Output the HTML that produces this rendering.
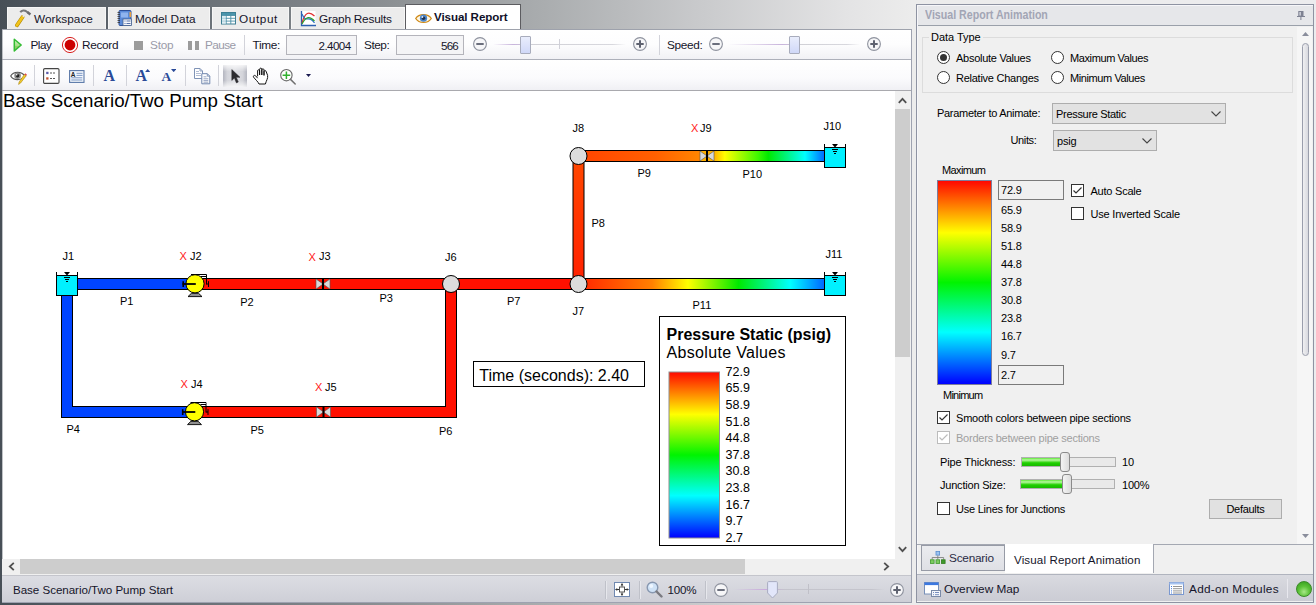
<!DOCTYPE html>
<html><head><meta charset="utf-8"><title>Visual Report</title>
<style>
*{box-sizing:border-box;margin:0;padding:0}
html,body{width:1316px;height:605px;overflow:hidden;background:#f0f0f0}
body{font-family:"Liberation Sans",sans-serif;font-size:12px;color:#1a1a1a;position:relative}
.abs,.abs *{position:absolute}
#root{left:0;top:0;width:1316px;height:605px;background:linear-gradient(90deg,#474f57 0px,#5d646b 120px,#747a80 260px,#8e9295 400px,#a9acae 540px,#c9cacc 700px,#e4e4e5 850px,#ececec 912px,#ececee 1316px);overflow:hidden}
.t{white-space:nowrap;line-height:1}
/* top tab bar */
#tabbar{left:0;top:0;width:912px;height:30px}
.tab{top:7px;height:22px;background:#ececec;border:1px solid #f6f6f6;border-bottom:none}
.tab .t{font-size:11.8px;top:5.6px;color:#15152a}
#tabact{left:405px;top:4px;width:116px;height:26px;background:#fff;border:1px solid #5c5c60;border-bottom:none}
/* toolbars */
#tb1{left:2px;top:29px;width:909px;height:31px;border-top:1px solid #9ea2ac;background:linear-gradient(#ffffff 0%,#fdfdfe 50%,#f1f1f5 100%);border-bottom:1px solid #adb0ba}
#tb2{left:2px;top:60px;width:909px;height:31px;background:linear-gradient(#ffffff 0%,#fbfbfd 60%,#f0f0f4 100%);border-bottom:1px solid #a9a9ae}
.tbt{font-size:11.8px;top:9.8px;color:#15152a}
.dis{color:#9a9aa8}
.sep{width:1px;background:#d2d3da}
.box{background:#f4f4f6;border:1px solid #b4b4bb}
/* canvas */
#canvas{left:2px;top:91px;width:893px;height:468px;background:#fff;overflow:hidden}
.lbl{font-size:11px;color:#000}
.red{color:#ff2020}
/* status */
#status{left:2px;top:575px;width:909px;height:27px;background:linear-gradient(#dcdde3,#cecfd7);border-top:1px solid #c4c5cc}
/* right panel */
#rp{left:916px;top:4px;width:398px;height:599px;border:1px solid #8e93a2;background:#f0f0f0}
.rt{font-size:11px;color:#000;letter-spacing:-0.2px;margin-top:1px}
.radio{width:13px;height:13px;border-radius:50%;border:1px solid #333;background:#fff}
.chk{width:13px;height:13px;border:1px solid #333;background:#fff}
</style></head><body>
<div id="root" class="abs">

<!-- ====== TAB BAR ====== -->
<div id="tabbar">
  <div class="tab" style="left:7px;width:99px"><svg style="left:6px;top:0px" width="20" height="20" viewBox="14 8 20 20"><path d="M16.9 25.3 L22.6 17" stroke="#b08800" stroke-width="3.8" stroke-linecap="round"/><path d="M16.9 25.3 L22.6 17" stroke="#f2c31c" stroke-width="2.7" stroke-linecap="round"/><path d="M22.9 16.6 L26.3 12.6" stroke="#e8e8ea" stroke-width="2"/><path d="M20.3 12.2 C21.6 10 24.6 9.8 26.6 11.6 L28.2 12.6" fill="none" stroke="#77787c" stroke-width="2"/><path d="M28.3 11.3 L31.2 13.6 L29.6 15.6 L26.8 13.3Z" fill="#6a6b70"/></svg><span class="t" style="left:26px;letter-spacing:0.01px">Workspace</span></div>
  <div class="tab" style="left:108px;width:102px"><svg style="left:6.5px;top:1px" width="18" height="18" viewBox="0 0 18 18"><rect x="3" y="1.5" width="12" height="15" rx="1" fill="#5a8ad8" stroke="#2c4f98" stroke-width="1"/><rect x="5" y="3.5" width="7" height="5" fill="#8fb4ee"/><rect x="7" y="10" width="8.5" height="6.5" fill="#f4f6fb" stroke="#44608e" stroke-width="0.8"/><path d="M8.5 12h1M10.5 12h4M8.5 14.5h1M10.5 14.5h4" stroke="#5570a8" stroke-width="1"/><path d="M1.5 3.5h2.5M1.5 5.5h2.5M1.5 7.5h2.5M1.5 9.5h2.5M1.5 11.5h2.5M1.5 13.5h2.5" stroke="#333" stroke-width="0.8"/><rect x="13.5" y="3" width="1.6" height="5" fill="#e8a040"/></svg><span class="t" style="left:26px;letter-spacing:0.02px">Model Data</span></div>
  <div class="tab" style="left:212px;width:77px"><svg style="left:8px;top:4px" width="16" height="13" viewBox="0 0 16 13"><rect x="0.5" y="0.5" width="14" height="11.5" fill="#fff" stroke="#3d7f94" stroke-width="1"/><rect x="1" y="1" width="13" height="2.5" fill="#4b95ac"/><path d="M1 3.5h13M1 6.3h13M1 9.1h13M5.2 1v11M9.8 1v11" stroke="#4b8fa6" stroke-width="0.9"/><rect x="1" y="3.9" width="3.8" height="8" fill="#cfe6ee" opacity="0.7"/></svg><span class="t" style="left:26px;letter-spacing:0.58px">Output</span></div>
  <div class="tab" style="left:291px;width:114px"><svg style="left:8px;top:2px" width="17" height="17" viewBox="0 0 17 17"><rect x="1.5" y="1" width="14" height="14" fill="#fff"/><path d="M1.5 1v14.5h14.5" fill="none" stroke="#2d5fb0" stroke-width="1.3"/><path d="M2 13 C5 2 9 1 14.5 6" fill="none" stroke="#e03030" stroke-width="1.3"/><path d="M2 4 C6 14 9 4 14.5 13" fill="none" stroke="#2d70c8" stroke-width="1.2"/><path d="M2 14 C6 6 10 6 14.5 11" fill="none" stroke="#30a030" stroke-width="1.3"/></svg><span class="t" style="left:27px;letter-spacing:-0.21px">Graph Results</span></div>
</div>
<div id="tabact"><svg style="left:9px;top:8px" width="17" height="11" viewBox="0 0 17 11"><path d="M0.7 5.5 C4 0.3 13 0.3 16.3 5.5 C13 10.7 4 10.7 0.7 5.5Z" fill="#fdf6e4" stroke="#d08a18" stroke-width="1.3"/><circle cx="8.5" cy="5.2" r="3.6" fill="#4a84c8"/><circle cx="8.5" cy="5.2" r="1.8" fill="#22304a"/><circle cx="7.4" cy="4" r="0.9" fill="#dfeaf8"/></svg><span class="t" style="left:28px;top:6px;font-size:11.6px;font-weight:bold;color:#101028;letter-spacing:-0.08px">Visual Report</span></div>

<!-- ====== TOOLBAR 1 ====== -->
<div id="tb1">
  <svg style="left:10px;top:7px" width="12" height="17" viewBox="0 0 12 17"><defs><linearGradient id="pg" x1="0" x2="0" y1="0" y2="1"><stop offset="0" stop-color="#d4f4c0"/><stop offset="0.55" stop-color="#a4e088"/><stop offset="0.6" stop-color="#90cc68"/><stop offset="1" stop-color="#98d070"/></linearGradient></defs><path d="M2.3 2.2 L9.2 8 L2.3 13.9 Z" fill="url(#pg)" stroke="#34bc34" stroke-width="1.5" stroke-linejoin="round"/></svg>
  <span class="t tbt" style="left:28.5px;letter-spacing:-0.52px">Play</span>
  <svg style="left:59px;top:6px" width="18" height="18" viewBox="0 0 18 18"><circle cx="9" cy="9" r="7.6" fill="#fff" stroke="#d82020" stroke-width="1"/><circle cx="9" cy="9" r="5.4" fill="#cc0000"/></svg>
  <span class="t tbt" style="left:80px;letter-spacing:-0.3px">Record</span>
  <div style="left:132px;top:11px;width:9px;height:9px;background:#9c9c9c"></div>
  <span class="t tbt dis" style="left:148px;letter-spacing:-0.22px">Stop</span>
  <div style="left:186px;top:11px;width:4px;height:9px;background:#9c9c9c"></div><div style="left:193px;top:11px;width:4px;height:9px;background:#9c9c9c"></div>
  <span class="t tbt dis" style="left:203px;letter-spacing:-0.59px">Pause</span>
  <div class="sep" style="left:242px;top:5px;height:20px"></div>
  <span class="t tbt" style="left:250.5px;letter-spacing:-0.34px">Time:</span>
  <div class="box" style="left:284px;top:5px;width:71px;height:20px"><span class="t" style="right:5.5px;top:4px;font-size:11.6px;color:#15152a;letter-spacing:-0.59px">2.4004</span></div>
  <span class="t tbt" style="left:362px;letter-spacing:-0.47px">Step:</span>
  <div class="box" style="left:394px;top:5px;width:68px;height:20px"><span class="t" style="right:5px;top:4px;font-size:11.6px;color:#15152a;letter-spacing:-0.77px">566</span></div>
  <svg style="left:470px;top:5.5px" width="16" height="16" viewBox="0 0 16 16"><circle cx="8" cy="8" r="6.4" fill="#f6f6f8" stroke="#8e929e" stroke-width="1.1"/><path d="M4.3 8h7.4" stroke="#6a6e7c" stroke-width="2"/></svg>
  <div style="left:491px;top:14px;width:133px;height:1px;background:linear-gradient(90deg,rgba(200,180,220,0) 0%,#c8b4dc 15%,#d0d0d6 28%,#d8d8de 90%,rgba(216,216,222,0) 100%)"></div><div style="left:557px;top:9px;width:1px;height:10px;background:#d0d0d8"></div><div style="left:518px;top:6px;width:11px;height:18px;border:1px solid #a8acbc;border-radius:1px;background:linear-gradient(#e9edfc,#d0d8f8)"></div>
  <svg style="left:629.5px;top:5.5px" width="16" height="16" viewBox="0 0 16 16"><circle cx="8" cy="8" r="6.4" fill="#f6f6f8" stroke="#8e929e" stroke-width="1.1"/><path d="M4.3 8h7.4M8 4.3v7.4" stroke="#5e6270" stroke-width="2"/></svg>
  <div class="sep" style="left:657px;top:5px;height:20px"></div>
  <span class="t tbt" style="left:665px;letter-spacing:-0.33px">Speed:</span>
  <svg style="left:706px;top:5.5px" width="16" height="16" viewBox="0 0 16 16"><circle cx="8" cy="8" r="6.4" fill="#f6f6f8" stroke="#8e929e" stroke-width="1.1"/><path d="M4.3 8h7.4" stroke="#6a6e7c" stroke-width="2"/></svg>
  <div style="left:726px;top:14px;width:132px;height:1px;background:linear-gradient(90deg,rgba(200,180,220,0) 0%,#c8b4dc 41%,#d0d0d6 54%,#d8d8de 90%,rgba(216,216,222,0) 100%)"></div><div style="left:787px;top:6px;width:11px;height:18px;border:1px solid #a8acbc;border-radius:1px;background:linear-gradient(#e9edfc,#d0d8f8)"></div>
  <svg style="left:863.5px;top:5.5px" width="16" height="16" viewBox="0 0 16 16"><circle cx="8" cy="8" r="6.4" fill="#f6f6f8" stroke="#8e929e" stroke-width="1.1"/><path d="M4.3 8h7.4M8 4.3v7.4" stroke="#5e6270" stroke-width="2"/></svg>
</div>

<!-- ====== TOOLBAR 2 ====== -->
<div id="tb2">
  <svg style="left:7.5px;top:9.5px" width="18" height="15" viewBox="0 0 18 15"><path d="M0.7 6 C3.5 1.2 11.5 1.2 15 6 C11.5 10.8 3.5 10.8 0.7 6Z" fill="#fff" stroke="#555" stroke-width="1.1"/><circle cx="7.6" cy="5.8" r="3.3" fill="#8a8a8a"/><circle cx="7.6" cy="5.8" r="1.7" fill="#222"/><circle cx="6.7" cy="4.8" r="0.8" fill="#fff"/><path d="M16.2 5.8 L10.6 13 L8.6 14.4 L9.1 12 L14.4 4.4Z" fill="#f4cc28" stroke="#a88414" stroke-width="0.6"/><path d="M14.4 4.4 L16.2 5.8 L17 4.7 L15.3 3.3Z" fill="#e04848"/></svg>
  <div class="sep" style="left:32px;top:5px;height:21px"></div>
  <svg style="left:40.5px;top:8px" width="17" height="16" viewBox="0 0 17 16"><rect x="0.6" y="0.6" width="15.4" height="14.8" rx="1.2" fill="#fff" stroke="#444" stroke-width="1.1"/><rect x="3.2" y="3.8" width="2.3" height="2.3" fill="#5a5aa8"/><path d="M7 5h6" stroke="#555" stroke-width="1" stroke-dasharray="2 1"/><rect x="3.2" y="9.3" width="2.3" height="2.3" fill="#c05030"/><path d="M7 10.5h6" stroke="#555" stroke-width="1" stroke-dasharray="2 1"/></svg>
  <svg style="left:67px;top:10px" width="16" height="13" viewBox="0 0 16 13"><rect x="0.6" y="0.6" width="14.4" height="11.8" fill="#f4f7fc" stroke="#5a78a8" stroke-width="1.1"/><text x="1.8" y="7" font-size="6.5" font-weight="bold" font-family="Liberation Sans, sans-serif" fill="#222">A</text><path d="M7.5 3.3h6M7.5 5.4h6M2.3 7.8h11M2.3 10h11" stroke="#6c8cc0" stroke-width="0.9"/></svg>
  <div class="sep" style="left:91px;top:5px;height:21px"></div>
  <span class="t" style="left:101.5px;top:8px;font-family:'Liberation Serif',serif;font-weight:bold;font-size:16px;color:#2a4a98">A</span>
  <div class="sep" style="left:124px;top:5px;height:21px"></div>
  <span class="t" style="left:133.5px;top:8px;font-family:'Liberation Serif',serif;font-weight:bold;font-size:16px;color:#2a4a98">A</span>
  <svg style="left:143px;top:9px" width="5.4" height="3.2" viewBox="0 0 7 4"><path d="M0 4 L3.5 0 L7 4Z" fill="#2a4a98"/></svg>
  <span class="t" style="left:159.5px;top:10px;font-family:'Liberation Serif',serif;font-weight:bold;font-size:13.5px;color:#2a4a98">A</span>
  <svg style="left:169px;top:9px" width="5.4" height="3.2" viewBox="0 0 7 4"><path d="M0 0 L3.5 4 L7 0Z" fill="#2a4a98"/></svg>
  <div class="sep" style="left:183px;top:5px;height:21px"></div>
  <svg style="left:191px;top:7px" width="19" height="18" viewBox="0 0 19 18"><path d="M1.5 1.5h5.5l2.5 2.5v7.5h-8z" fill="#fff" stroke="#7f93b6" stroke-width="1"/><path d="M7 1.5v2.5h2.5" fill="none" stroke="#7f93b6" stroke-width="0.8"/><path d="M3 4.5h3M3 6.5h5M3 8.5h5" stroke="#a9b6cf" stroke-width="0.9"/><path d="M8.8 6.7h5.5l2.5 2.5v7.6h-8z" fill="#fff" stroke="#6f86ad" stroke-width="1"/><path d="M14.3 6.7v2.5h2.5" fill="none" stroke="#6f86ad" stroke-width="0.8"/><path d="M10.5 9.8h3M10.5 11.8h4.8M10.5 13.6h4.8M10.5 15.2h4.8" stroke="#8d9dbd" stroke-width="0.9"/></svg>
  <div class="sep" style="left:216px;top:5px;height:21px"></div>
  <div style="left:221px;top:5px;width:24px;height:22px;background:linear-gradient(90deg,#b4b6c0 0%,#d4d5db 18%,#dfe0e5 50%,#d4d5db 82%,#b4b6c0 100%)"><div style="left:0;top:0;width:24px;height:22px;background:linear-gradient(rgba(255,255,255,0.75),rgba(255,255,255,0) 30%,rgba(255,255,255,0) 70%,rgba(255,255,255,0.75))"></div></div>
  <svg style="left:228.5px;top:9px" width="10" height="15" viewBox="0 0 10 15"><path d="M0.8 0.6 L0.8 11.4 L3.4 9 L5.4 13.9 L7.3 13 L5.3 8.3 L9 8.3 Z" fill="#2c2c30" stroke="#2c2c30" stroke-width="0.5" stroke-linejoin="round"/></svg>
  <svg style="left:250px;top:7px" width="18" height="18" viewBox="0 0 18 18"><path d="M5.6 9.3 V3.8 C5.6 2.4 7.6 2.4 7.6 3.8 V8 V2.2 C7.6 0.8 9.8 0.8 9.8 2.2 V8 V2.8 C9.8 1.5 12 1.5 12 2.8 V8.4 V4.6 C12 3.3 14.2 3.3 14.2 4.6 L15.6 8.4 C16.2 11.5 14.2 13.6 13.4 17 H7 C6.4 15 3.2 12.4 1.6 10.2 C0.7 8.8 2.6 7.6 3.8 9 L5.6 11.2" fill="#fff" stroke="#111" stroke-width="1" stroke-linejoin="round"/></svg>
  <svg style="left:277px;top:8px" width="18" height="18" viewBox="0 0 18 18"><circle cx="7.4" cy="7.2" r="5.7" fill="#fff" stroke="#686868" stroke-width="1.1"/><path d="M3.6 7.2h7.6M7.4 3.4v7.6" stroke="#30b030" stroke-width="1.5"/><path d="M11.5 11.4 L16.2 16" stroke="#707070" stroke-width="1.5" stroke-linecap="round"/></svg>
  <svg style="left:304px;top:14px" width="5" height="3" viewBox="0 0 5 3"><path d="M0 0 L2.5 3 L5 0Z" fill="#1a1a50"/></svg>
</div>

<!-- ====== CANVAS ====== -->
<div id="canvas">
  <span class="t" style="left:1px;top:1px;font-size:18.7px;color:#000">Base Scenario/Two Pump Start</span>
<svg class="cv" width="893" height="468" viewBox="2 91 893 468" style="left:0;top:0" font-family="Liberation Sans, sans-serif">
<defs>
<linearGradient id="gP9" x1="0" x2="1" y1="0" y2="0"><stop offset="0" stop-color="#ff4400"/><stop offset="0.6" stop-color="#ff6000"/><stop offset="1" stop-color="#ff8c00"/></linearGradient>
<linearGradient id="gP10" x1="0" x2="1" y1="0" y2="0"><stop offset="0" stop-color="#ff9800"/><stop offset="0.07" stop-color="#ffb800"/><stop offset="0.15" stop-color="#ffff00"/><stop offset="0.43" stop-color="#40f800"/><stop offset="0.52" stop-color="#00e800"/><stop offset="0.83" stop-color="#00ffff"/><stop offset="1" stop-color="#0064ff"/></linearGradient>
<linearGradient id="gP11" x1="0" x2="1" y1="0" y2="0"><stop offset="0" stop-color="#ff2800"/><stop offset="0.04" stop-color="#ff3000"/><stop offset="0.30" stop-color="#ff8000"/><stop offset="0.445" stop-color="#ffff00"/><stop offset="0.65" stop-color="#00e800"/><stop offset="0.86" stop-color="#00ffff"/><stop offset="1" stop-color="#0064ff"/></linearGradient>
<linearGradient id="gP8" x1="0" x2="0" y1="0" y2="1"><stop offset="0" stop-color="#ff4800"/><stop offset="1" stop-color="#ff2000"/></linearGradient>
<linearGradient id="gLeg" x1="0" x2="0" y1="0" y2="1"><stop offset="0" stop-color="#ff0800"/><stop offset="0.255" stop-color="#ffff00"/><stop offset="0.5" stop-color="#00f400"/><stop offset="0.745" stop-color="#00ffff"/><stop offset="1" stop-color="#0000ff"/></linearGradient>
</defs>
<path d="M67 290 V412 H194" fill="none" stroke="#000" stroke-width="12" stroke-linejoin="miter"/>
<path d="M67 290 V412 H194" fill="none" stroke="#0044ff" stroke-width="10" stroke-linejoin="miter"/>
<path d="M194 412 H451 V284" fill="none" stroke="#000" stroke-width="12"/>
<path d="M194 412 H451 V284" fill="none" stroke="#ff1000" stroke-width="10"/>
<rect x="77" y="278" width="118" height="12" fill="#000"/><rect x="77" y="279" width="118" height="10" fill="#0044ff"/>
<rect x="195" y="278" width="383" height="12" fill="#000"/><rect x="195" y="279" width="383" height="10" fill="#ff1000"/>
<rect x="572.5" y="156" width="12" height="128" fill="#000"/><rect x="573.5" y="156" width="10" height="128" fill="url(#gP8)"/>
<rect x="578" y="150" width="129" height="12" fill="#000"/><rect x="578" y="151" width="129" height="10" fill="url(#gP9)"/>
<rect x="707" y="150" width="118" height="12" fill="#000"/><rect x="707" y="151" width="118" height="10" fill="url(#gP10)"/>
<rect x="578" y="278" width="247" height="12" fill="#000"/><rect x="578" y="279" width="247" height="10" fill="url(#gP11)"/>
<rect x="56.5" y="275.5" width="21" height="20" fill="#00f0ff" stroke="#000" stroke-width="1"/><path d="M56.5 272 V276 M77.5 272 V276" stroke="#000" stroke-width="1" fill="none"/><path d="M64 272 h6 l-3 3.5 z" fill="#000"/><path d="M64 277.5 h6 M65 279.5 h4 M66 281.5 h2" stroke="#000" stroke-width="1"/>
<rect x="824.5" y="147.5" width="21" height="20" fill="#00f0ff" stroke="#000" stroke-width="1"/><path d="M824.5 144 V148 M845.5 144 V148" stroke="#000" stroke-width="1" fill="none"/><path d="M832 144 h6 l-3 3.5 z" fill="#000"/><path d="M832 149.5 h6 M833 151.5 h4 M834 153.5 h2" stroke="#000" stroke-width="1"/>
<rect x="824.5" y="275.5" width="21" height="20" fill="#00f0ff" stroke="#000" stroke-width="1"/><path d="M824.5 272 V276 M845.5 272 V276" stroke="#000" stroke-width="1" fill="none"/><path d="M832 272 h6 l-3 3.5 z" fill="#000"/><path d="M832 277.5 h6 M833 279.5 h4 M834 281.5 h2" stroke="#000" stroke-width="1"/>
<circle cx="451" cy="284" r="8.5" fill="#dcdcdc" stroke="#000" stroke-width="1"/>
<circle cx="578.5" cy="284" r="8.5" fill="#dcdcdc" stroke="#000" stroke-width="1"/>
<circle cx="578.5" cy="156" r="8.5" fill="#dcdcdc" stroke="#000" stroke-width="1"/>
<rect x="316" y="279" width="14" height="10" fill="#ff1000"/><path d="M316 279 L323 284 L316 289 Z M330 279 L323 284 L330 289 Z" fill="#d8d8d8" stroke="#555" stroke-width="0.6"/><path d="M323 279 V289" stroke="#000" stroke-width="2"/>
<rect x="316.5" y="407" width="14" height="10" fill="#ff1000"/><path d="M316.5 407 L323.5 412 L316.5 417 Z M330.5 407 L323.5 412 L330.5 417 Z" fill="#d8d8d8" stroke="#555" stroke-width="0.6"/><path d="M323.5 407 V417" stroke="#000" stroke-width="2"/>
<rect x="700" y="151" width="14" height="10" fill="#ffb000"/><path d="M700 151 L707 156 L700 161 Z M714 151 L707 156 L714 161 Z" fill="#d8d8d8" stroke="#555" stroke-width="0.6"/><path d="M707 151 V161" stroke="#000" stroke-width="2"/>
<path d="M188 296.6 L191.4 293.3 H198.6 L202 296.6 Z" fill="#909090" stroke="#000" stroke-width="0.9"/><path d="M191 274.5 H206.5 V284.5" fill="none" stroke="#000" stroke-width="1"/><path d="M201 276.5 H206.5" fill="none" stroke="#000" stroke-width="1"/><rect x="202" y="275" width="4" height="1" fill="#fff"/><path d="M208.5 281.2 V287 M206.5 284 H208.5" fill="none" stroke="#000" stroke-width="1"/><circle cx="195" cy="283.8" r="9.1" fill="#ffff00" stroke="#000" stroke-width="1"/><path d="M182.5 284 H195.8" stroke="#000" stroke-width="1.8"/><path d="M183.2 281.2 V287" stroke="#000" stroke-width="1.6"/>
<path d="M187.5 424.6 L190.9 421.3 H198.1 L201.5 424.6 Z" fill="#909090" stroke="#000" stroke-width="0.9"/><path d="M190.5 402.5 H206.0 V412.5" fill="none" stroke="#000" stroke-width="1"/><path d="M200.5 404.5 H206.0" fill="none" stroke="#000" stroke-width="1"/><rect x="201.5" y="403" width="4" height="1" fill="#fff"/><path d="M208.0 409.2 V415 M206.0 412 H208.0" fill="none" stroke="#000" stroke-width="1"/><circle cx="194.5" cy="411.8" r="9.1" fill="#ffff00" stroke="#000" stroke-width="1"/><path d="M182.0 412 H195.3" stroke="#000" stroke-width="1.8"/><path d="M182.7 409.2 V415" stroke="#000" stroke-width="1.6"/>
<text x="62.5" y="260" font-size="11" fill="#000">J1</text>
<text x="190" y="260" font-size="11" fill="#000">J2</text>
<text x="319" y="260" font-size="11" fill="#000">J3</text>
<text x="445" y="261" font-size="11" fill="#000">J6</text>
<text x="572.5" y="132" font-size="11" fill="#000">J8</text>
<text x="700" y="131.5" font-size="11" fill="#000">J9</text>
<text x="823.5" y="130" font-size="11" fill="#000">J10</text>
<text x="825.5" y="258" font-size="11" fill="#000">J11</text>
<text x="572.5" y="315" font-size="11" fill="#000">J7</text>
<text x="191" y="388" font-size="11" fill="#000">J4</text>
<text x="325" y="391" font-size="11" fill="#000">J5</text>
<text x="120" y="304.5" font-size="11" fill="#000">P1</text>
<text x="240.2" y="306" font-size="11" fill="#000">P2</text>
<text x="379.5" y="301.5" font-size="11" fill="#000">P3</text>
<text x="507" y="304.5" font-size="11" fill="#000">P7</text>
<text x="591.5" y="227" font-size="11" fill="#000">P8</text>
<text x="637.5" y="177" font-size="11" fill="#000">P9</text>
<text x="742.5" y="178" font-size="11" fill="#000">P10</text>
<text x="692.5" y="309" font-size="11" fill="#000">P11</text>
<text x="66.5" y="433" font-size="11" fill="#000">P4</text>
<text x="250.5" y="434" font-size="11" fill="#000">P5</text>
<text x="439" y="435" font-size="11" fill="#000">P6</text>
<text x="179.5" y="260" font-size="11" fill="#ff2020">X</text>
<text x="308.5" y="260.5" font-size="11" fill="#ff2020">X</text>
<text x="691" y="131.5" font-size="11" fill="#ff2020">X</text>
<text x="180.5" y="388" font-size="11" fill="#ff2020">X</text>
<text x="315" y="391" font-size="11" fill="#ff2020">X</text>
<rect x="473.5" y="361.5" width="171" height="25" fill="#fff" stroke="#000" stroke-width="1"/>
<text x="479.3" y="380.6" font-size="16" fill="#000">Time (seconds): 2.40</text>
<rect x="659.5" y="316.5" width="186" height="229" fill="#fff" stroke="#000" stroke-width="1"/>
<text x="666.5" y="339.5" font-size="16" font-weight="bold" fill="#000">Pressure Static (psig)</text>
<text x="666.5" y="358" font-size="16" fill="#000" letter-spacing="0.33">Absolute Values</text>
<rect x="669" y="372" width="50.5" height="166" fill="url(#gLeg)" stroke="#909090" stroke-width="1"/>
<text x="725.5" y="375.8" font-size="12.5" fill="#000">72.9</text>
<text x="725.5" y="392.40000000000003" font-size="12.5" fill="#000">65.9</text>
<text x="725.5" y="409.0" font-size="12.5" fill="#000">58.9</text>
<text x="725.5" y="425.6" font-size="12.5" fill="#000">51.8</text>
<text x="725.5" y="442.20000000000005" font-size="12.5" fill="#000">44.8</text>
<text x="725.5" y="458.8" font-size="12.5" fill="#000">37.8</text>
<text x="725.5" y="475.40000000000003" font-size="12.5" fill="#000">30.8</text>
<text x="725.5" y="492.0" font-size="12.5" fill="#000">23.8</text>
<text x="725.5" y="508.6" font-size="12.5" fill="#000">16.7</text>
<text x="725.5" y="525.2" font-size="12.5" fill="#000">9.7</text>
<text x="725.5" y="541.8" font-size="12.5" fill="#000">2.7</text>
</svg>
</div>

<div style="left:911px;top:29px;width:1px;height:574px;background:#9ea2b0"></div>
<div style="left:2px;top:602px;width:910px;height:1px;background:#9ea2b0"></div>
<div style="left:2px;top:30px;width:1px;height:572px;background:#8a9098;opacity:0.55"></div>
<!-- ====== SCROLLBARS ====== -->
<div id="vs" style="left:895px;top:91px;width:16px;height:468px;background:#f0f0f0"><div style="left:0;top:18px;width:15px;height:248px;background:#cdcdcd"></div>
<svg style="left:3px;top:6px" width="9" height="7" viewBox="0 0 9 7"><path d="M0.8 5.8 L4.5 1.8 L8.2 5.8" fill="none" stroke="#505050" stroke-width="1.8"/></svg>
<svg style="left:3px;top:455px" width="9" height="7" viewBox="0 0 9 7"><path d="M0.8 1.2 L4.5 5.2 L8.2 1.2" fill="none" stroke="#505050" stroke-width="1.8"/></svg></div>
<div id="hs" style="left:2px;top:559px;width:909px;height:16px;background:#f0f0f0"><div style="left:18px;top:0;width:725px;height:15px;background:#cdcdcd"></div>
<svg style="left:6px;top:3px" width="7" height="9" viewBox="0 0 7 9"><path d="M5.8 0.8 L1.8 4.5 L5.8 8.2" fill="none" stroke="#505050" stroke-width="1.8"/></svg>
<svg style="left:881px;top:3px" width="7" height="9" viewBox="0 0 7 9"><path d="M1.2 0.8 L5.2 4.5 L1.2 8.2" fill="none" stroke="#505050" stroke-width="1.8"/></svg></div>

<!-- ====== STATUS ====== -->
<div id="status"><span class="t" style="left:11px;top:7.5px;font-size:11.8px;font-size:11.6px;color:#15152a;letter-spacing:-0.04px">Base Scenario/Two Pump Start</span>
<div class="sep" style="left:603px;top:5px;height:18px;background:#bfc1c9;box-shadow:1px 0 0 #e6e7ec"></div>
<svg style="left:612px;top:6px" width="16" height="15" viewBox="0 0 16 15"><rect x="0.5" y="0.5" width="15" height="14" fill="#fff" stroke="#7088b0" stroke-width="1"/><rect x="5.5" y="5" width="5" height="5" fill="#fff" stroke="#444" stroke-width="0.9"/><path d="M8 1.5v3M8 10.5v3M1.5 7.5h3.5M11 7.5h3.5" stroke="#333" stroke-width="1"/><path d="M6.6 3.2L8 1.4l1.4 1.8zM6.6 11.8L8 13.6l1.4-1.8zM3.2 6.1L1.4 7.5l1.8 1.4zM12.8 6.1l1.8 1.4-1.8 1.4z" fill="#333"/></svg>
<div class="sep" style="left:637px;top:5px;height:18px;background:#bfc1c9;box-shadow:1px 0 0 #e6e7ec"></div>
<svg style="left:644px;top:5px" width="17" height="17" viewBox="0 0 17 17"><circle cx="6.5" cy="6.5" r="5.3" fill="#cfe2f6" stroke="#8898b0" stroke-width="1.4"/><circle cx="5.2" cy="5" r="2" fill="#eef6ff"/><path d="M10.5 10.5 L15.5 15.5" stroke="#7a7a80" stroke-width="2.4" stroke-linecap="round"/></svg>
<span class="t" style="left:665.5px;top:7.5px;font-size:11.6px;color:#15152a;letter-spacing:-0.22px">100%</span>
<div class="sep" style="left:703px;top:5px;height:18px;background:#bfc1c9;box-shadow:1px 0 0 #e6e7ec"></div>
<svg style="left:711px;top:5.5px" width="16" height="16" viewBox="0 0 16 16"><circle cx="8" cy="8" r="6.4" fill="#f6f6f8" stroke="#8e929e" stroke-width="1.1"/><path d="M4.3 8h7.4" stroke="#6a6e7c" stroke-width="2"/></svg>
<div style="left:732px;top:13px;width:150px;height:1px;background:linear-gradient(90deg,rgba(200,170,220,0) 0%,#c8a8dc 22%,#c4c4cc 34%,#c4c4cc 92%,rgba(196,196,204,0) 100%)"></div>
<div style="left:806px;top:8px;width:1px;height:10px;background:#c0c0c8"></div>
<svg style="left:765px;top:5px" width="11" height="18" viewBox="0 0 11 18"><path d="M0.6 1.6 Q0.6 0.6 1.6 0.6 H9.4 Q10.4 0.6 10.4 1.6 V12 L5.5 17 L0.6 12Z" fill="#e2e6fa" stroke="#a8acc0" stroke-width="1"/></svg>
<svg style="left:887px;top:5.5px" width="16" height="16" viewBox="0 0 16 16"><circle cx="8" cy="8" r="6.4" fill="#f6f6f8" stroke="#8e929e" stroke-width="1.1"/><path d="M4.3 8h7.4M8 4.3v7.4" stroke="#5e6270" stroke-width="2"/></svg>
</div>

<!-- ====== RIGHT PANEL ====== -->
<div id="rp">
<div style="left:0;top:0;width:396px;height:21px;background:#e6e7ea;border-bottom:1px solid #9aa0aa"></div>
<div style="left:0;top:0;width:396px;height:1px;background:#f6f6f9"></div><div style="left:0;top:0;width:1px;height:597px;background:#f6f6f9"></div>
<span class="t" style="left:8px;top:4px;font-size:12.4px;font-weight:bold;color:#a2a5b5;transform:scaleX(0.858);transform-origin:0 0">Visual Report Animation</span>
<svg style="left:380px;top:6px" width="8" height="9" viewBox="0 0 8 9"><rect x="1.8" y="0.5" width="4.2" height="4.6" fill="#c8cad4" stroke="#7e8292" stroke-width="1"/><rect x="4" y="0.5" width="2" height="4.6" fill="#7e8292"/><path d="M0 5.5h8M3.9 5.5v3.5" stroke="#7e8292" stroke-width="1"/></svg>
<div style="left:380px;top:22px;width:15px;height:517px;background:#f6f6f6"></div>
<div style="left:385px;top:38px;width:7px;height:313px;border:1px solid #9a9eac;border-radius:4px;background:linear-gradient(90deg,#f0f0f2,#d8d9df)"></div>
<svg style="left:385px;top:27px" width="7" height="4" viewBox="0 0 7 4"><path d="M0 4 L3.5 0 L7 4z" fill="#8a8e9c"/></svg>
<svg style="left:385px;top:529px" width="7" height="4" viewBox="0 0 7 4"><path d="M0 0 L3.5 4 L7 0z" fill="#8a8e9c"/></svg>
<div style="left:5px;top:32px;width:371px;height:56px;border:1px solid #dcdcdc"></div>
<span class="t rt" style="left:12px;top:26px;background:#f0f0f0;padding:0 2px;letter-spacing:-0.04px">Data Type</span>
<div class="radio" style="left:20.0px;top:46.0px"><div style="left:2px;top:2px;width:7px;height:7px;border-radius:50%;background:#333"></div></div>
<div class="radio" style="left:20.0px;top:66.0px"></div>
<div class="radio" style="left:134.0px;top:46.0px"></div>
<div class="radio" style="left:134.0px;top:66.0px"></div>
<span class="t rt" style="left:39px;top:46.5px;;letter-spacing:-0.27px">Absolute Values</span>
<span class="t rt" style="left:39px;top:66.5px;;letter-spacing:-0.25px">Relative Changes</span>
<span class="t rt" style="left:153px;top:46.5px;;letter-spacing:-0.39px">Maximum Values</span>
<span class="t rt" style="left:153px;top:66.5px;;letter-spacing:-0.4px">Minimum Values</span>
<span class="t rt" style="left:20px;top:102px;;letter-spacing:-0.3px">Parameter to Animate:</span>
<span class="t rt" style="left:93.5px;top:129px;;letter-spacing:-0.36px">Units:</span>
<div style="left:135px;top:98px;width:174px;height:21px;background:#e2e2e2;border:1px solid #adadad"><span class="t rt" style="left:3px;top:3.5px;letter-spacing:-0.31px">Pressure Static</span><svg style="right:4px;top:6.5px" width="10" height="6" viewBox="0 0 10 6"><path d="M0.5 0.5 L5 5 L9.5 0.5" fill="none" stroke="#444" stroke-width="1.1"/></svg></div>
<div style="left:136px;top:125px;width:104px;height:21px;background:#e2e2e2;border:1px solid #adadad"><span class="t rt" style="left:3px;top:3.5px">psig</span><svg style="right:4px;top:6.5px" width="10" height="6" viewBox="0 0 10 6"><path d="M0.5 0.5 L5 5 L9.5 0.5" fill="none" stroke="#444" stroke-width="1.1"/></svg></div>
<span class="t rt" style="left:25px;top:159px;;letter-spacing:-0.61px">Maximum</span>
<div style="left:20px;top:175px;width:55px;height:205px;border:1px solid #7d7d9c;background:linear-gradient(#ff0800 0%,#ffff00 25.5%,#00f400 50%,#00ffff 74.5%,#0000ff 100%)"></div>
<span class="t rt" style="left:26px;top:384px;;letter-spacing:-0.75px">Minimum</span>
<div style="left:81px;top:175px;width:66px;height:20px;background:#f0f0f0;border:1px solid #7a7a7a"><span class="t rt" style="left:2px;top:3px">72.9</span></div>
<div style="left:81px;top:360px;width:66px;height:20px;background:#f0f0f0;border:1px solid #7a7a7a"><span class="t rt" style="left:2px;top:3px">2.7</span></div>
<span class="t rt" style="left:84px;top:198.7px;">65.9</span>
<span class="t rt" style="left:84px;top:216.79999999999998px;">58.9</span>
<span class="t rt" style="left:84px;top:234.89999999999998px;">51.8</span>
<span class="t rt" style="left:84px;top:253.0px;">44.8</span>
<span class="t rt" style="left:84px;top:271.1px;">37.8</span>
<span class="t rt" style="left:84px;top:289.2px;">30.8</span>
<span class="t rt" style="left:84px;top:307.3px;">23.8</span>
<span class="t rt" style="left:84px;top:325.4px;">16.7</span>
<span class="t rt" style="left:84px;top:343.5px;">9.7</span>
<div class="chk" style="left:154px;top:179px;border-color:#333"><svg style="left:0;top:0" width="11" height="11" viewBox="0 0 11 11"><path d="M1.5 5.5 L4 8 L9.5 2.5" fill="none" stroke="#333" stroke-width="1.2"/></svg></div>
<span class="t rt" style="left:173.5px;top:180px;;letter-spacing:-0.23px">Auto Scale</span>
<div class="chk" style="left:154px;top:202px;border-color:#333"></div>
<span class="t rt" style="left:173.5px;top:203px;;letter-spacing:-0.2px">Use Inverted Scale</span>
<div class="chk" style="left:20px;top:406px;border-color:#333"><svg style="left:0;top:0" width="11" height="11" viewBox="0 0 11 11"><path d="M1.5 5.5 L4 8 L9.5 2.5" fill="none" stroke="#333" stroke-width="1.2"/></svg></div>
<span class="t rt" style="left:39px;top:407px;;letter-spacing:-0.21px">Smooth colors between pipe sections</span>
<div class="chk" style="left:20px;top:426px;border-color:#bcbcbc"><svg style="left:0;top:0" width="11" height="11" viewBox="0 0 11 11"><path d="M1.5 5.5 L4 8 L9.5 2.5" fill="none" stroke="#bcbcbc" stroke-width="1.2"/></svg></div>
<span class="t rt" style="left:39px;top:427px;color:#a0a0a0;letter-spacing:-0.23px">Borders between pipe sections</span>
<span class="t rt" style="left:23px;top:451px;;letter-spacing:-0.14px">Pipe Thickness:</span>
<span class="t rt" style="left:23px;top:474px;;letter-spacing:-0.21px">Junction Size:</span>
<div style="left:104px;top:452px;width:95px;height:10px;border:1px solid #b0b0b0;background:#e9e9e9"><div style="left:0;top:0;width:39px;height:8px;background:linear-gradient(#5fe83a 0%,#b8f8a0 25%,#20d000 60%,#18b800 100%)"></div></div><div style="left:143px;top:446.5px;width:10px;height:20.0px;border:1px solid #8a8a8a;border-radius:3px;background:linear-gradient(90deg,#f4f4f4,#dcdcdc)"></div>
<div style="left:103px;top:474px;width:95px;height:10px;border:1px solid #b0b0b0;background:#e9e9e9"><div style="left:0;top:0;width:42px;height:8px;background:linear-gradient(#5fe83a 0%,#b8f8a0 25%,#20d000 60%,#18b800 100%)"></div></div><div style="left:145px;top:469px;width:10px;height:20px;border:1px solid #8a8a8a;border-radius:3px;background:linear-gradient(90deg,#f4f4f4,#dcdcdc)"></div>
<span class="t rt" style="left:205px;top:451px;">10</span>
<span class="t rt" style="left:205px;top:474px;">100%</span>
<div class="chk" style="left:20px;top:497px;border-color:#333"></div>
<span class="t rt" style="left:39px;top:498px;;letter-spacing:-0.23px">Use Lines for Junctions</span>
<div style="left:292px;top:494px;width:73px;height:20px;background:#e1e1e1;border:1px solid #adadad;text-align:center"><span class="t rt" style="left:0;width:71px;top:3px;text-align:center;letter-spacing:-0.29px">Defaults</span></div>
<div style="left:0;top:539px;width:396px;height:1px;background:#a4a8b2"></div>
<div style="left:4px;top:540px;width:84px;height:26px;background:linear-gradient(#ebecef,#dfe0e5);border:1px solid #979ba6"></div>
<svg style="left:13px;top:546px" width="16" height="13" viewBox="0 0 16 13"><rect x="6" y="0.5" width="3.6" height="3.6" fill="#9cc4f0" stroke="#5a8ed0" stroke-width="0.8"/><path d="M7.8 4.5v2M2.2 8.5v-2h11.4v2M7.8 6.5v2" fill="none" stroke="#777" stroke-width="0.8"/><rect x="0.5" y="8.8" width="3.6" height="3.6" fill="#7ccc60" stroke="#3f9a2c" stroke-width="0.8"/><rect x="6" y="8.8" width="3.6" height="3.6" fill="#7ccc60" stroke="#3f9a2c" stroke-width="0.8"/><rect x="11.5" y="8.8" width="3.6" height="3.6" fill="#3f9a2c" stroke="#2f7a1c" stroke-width="0.8"/></svg>
<span class="t" style="left:32px;top:547.5px;font-size:11.8px;color:#2a2a44;letter-spacing:-0.22px">Scenario</span>
<div style="left:88px;top:539px;width:149px;height:29px;background:#fff;border-right:1px solid #a4a8b2"></div>
<span class="t" style="left:97px;top:548.6px;font-size:11.6px;color:#15152a;letter-spacing:0.13px">Visual Report Animation</span>
<div style="left:0;top:569px;width:396px;height:27px;background:linear-gradient(#d9dae0,#cbccd4);border-top:1px solid #b0b4be"></div>
<svg style="left:7px;top:577px" width="17" height="15" viewBox="0 0 17 15"><rect x="0.5" y="0.5" width="14" height="11.5" fill="#fff" stroke="#7890b8" stroke-width="1"/><rect x="0.5" y="0.5" width="14" height="2.6" fill="#3c78e0"/><rect x="7.5" y="8.5" width="9" height="6" fill="#f4f6fb" stroke="#7a8aa8" stroke-width="1"/><path d="M9 10.5h1M11 10.5h4M9 12.7h1M11 12.7h4" stroke="#6a82b8" stroke-width="0.9"/></svg>
<span class="t" style="left:27px;top:578.8px;font-size:11.8px;color:#15152a;letter-spacing:0px">Overview Map</span>
<svg style="left:252px;top:577px" width="15" height="13" viewBox="0 0 15 13"><rect x="0.5" y="0.5" width="14" height="12" fill="#fff" stroke="#7a98d0" stroke-width="1"/><rect x="0.5" y="0.5" width="14" height="2" fill="#a8c4f0"/><path d="M2 4.5h1M2 6.7h1M2 8.9h1M2 11h1" stroke="#3c78e0" stroke-width="1"/><path d="M4 4.5h9M4 6.7h9M4 8.9h9M4 11h9" stroke="#888" stroke-width="0.9"/></svg>
<span class="t" style="left:272px;top:578.8px;font-size:11.8px;color:#15152a;letter-spacing:0.28px">Add-on Modules</span>
<div style="left:370px;top:574px;width:1px;height:19px;background:#e8e8ee"></div>
<div style="left:379px;top:576px;width:16px;height:16px;border-radius:50%;border:1px solid #3a8a28;background:radial-gradient(circle at 50% 70%,#a8e888 0%,#5cc238 45%,#2f9a18 100%)"></div>
</div>

</div>
</body></html>
